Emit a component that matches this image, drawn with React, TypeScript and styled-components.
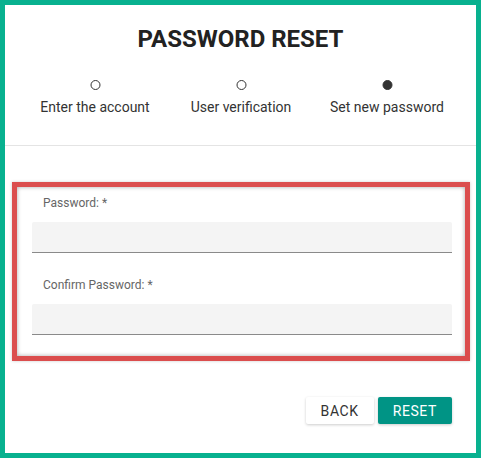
import styled, { createGlobalStyle } from "styled-components";

const GlobalStyle = createGlobalStyle`
  html, body {
    margin: 0;
    padding: 0;
    background: #ffffff;
  }
  * {
    box-sizing: border-box;
  }
`;

const Frame = styled.div`
  width: 481px;
  height: 458px;
  border: 5px solid #08b18f;
  background: #ffffff;
  font-family: Roboto, "Liberation Sans", sans-serif;
  display: flex;
  flex-direction: column;
`;

const Header = styled.div`
  padding: 20px 0 29px;
  border-bottom: 1px solid #e4e4e4;
  display: flex;
  flex-direction: column;
  align-items: center;
`;

const Title = styled.h1`
  margin: 0;
  font-size: 24px;
  line-height: 28px;
  font-weight: 700;
  color: #222222;
`;

const Steps = styled.div`
  margin-top: 27px;
  display: grid;
  grid-template-columns: repeat(3, 146px);
  transform: translateX(0.5px);
`;

const Step = styled.div`
  display: flex;
  flex-direction: column;
  align-items: center;
  gap: 8px;
`;

const Dot = styled.span<{ $active?: boolean }>`
  width: 10px;
  height: 10px;
  border-radius: 50%;
  border: 1.5px solid #333333;
  background: ${(p) => (p.$active ? "#333333" : "transparent")};
`;

const StepLabel = styled.span`
  font-size: 14px;
  line-height: 18px;
  color: #333333;
`;

const Highlight = styled.div`
  margin: 36px 6px 0 7px;
  border: 5px solid #db4d4d;
  box-shadow: inset 0 0 4px rgba(0, 0, 0, 0.35), 0 0 3px rgba(0, 0, 0, 0.2);
  padding: 8px 13px 21px 15px;
  display: flex;
  flex-direction: column;
`;

const Field = styled.div`
  display: flex;
  flex-direction: column;
  & + & {
    margin-top: 24px;
  }
`;

const FieldLabel = styled.label`
  font-size: 12px;
  line-height: 16px;
  color: #666666;
  padding-left: 11px;
  margin-bottom: 11px;
`;

const Input = styled.input`
  height: 31px;
  border: none;
  border-bottom: 1px solid #8a8a8a;
  border-radius: 2px 2px 0 0;
  background: #f4f4f4;
  outline: none;
  padding: 0 11px;
  font-family: inherit;
  font-size: 14px;
`;

const Actions = styled.div`
  margin-top: 36px;
  padding-right: 24px;
  display: flex;
  justify-content: flex-end;
  gap: 4px;
`;

const Button = styled.button<{ $primary?: boolean }>`
  height: 27px;
  padding: 0 15px;
  border: none;
  border-radius: 2px;
  font-family: inherit;
  font-size: 14px;
  font-weight: 400;
  letter-spacing: 0.6px;
  text-transform: uppercase;
  background: ${(p) => (p.$primary ? "#009485" : "#ffffff")};
  color: ${(p) => (p.$primary ? "#ffffff" : "#333333")};
  box-shadow: 0 1px 3px rgba(0, 0, 0, 0.2);
  cursor: pointer;
`;

const steps = [
  { label: "Enter the account", active: false },
  { label: "User verification", active: false },
  { label: "Set new password", active: true },
];

export default function App() {
  return (
    <>
      <GlobalStyle />
      <Frame>
        <Header>
          <Title>PASSWORD RESET</Title>
          <Steps>
            {steps.map((s) => (
              <Step key={s.label}>
                <Dot $active={s.active} />
                <StepLabel>{s.label}</StepLabel>
              </Step>
            ))}
          </Steps>
        </Header>
        <Highlight>
          <Field>
            <FieldLabel>Password: *</FieldLabel>
            <Input type="password" />
          </Field>
          <Field>
            <FieldLabel>Confirm Password: *</FieldLabel>
            <Input type="password" />
          </Field>
        </Highlight>
        <Actions>
          <Button>Back</Button>
          <Button $primary>Reset</Button>
        </Actions>
      </Frame>
    </>
  );
}
